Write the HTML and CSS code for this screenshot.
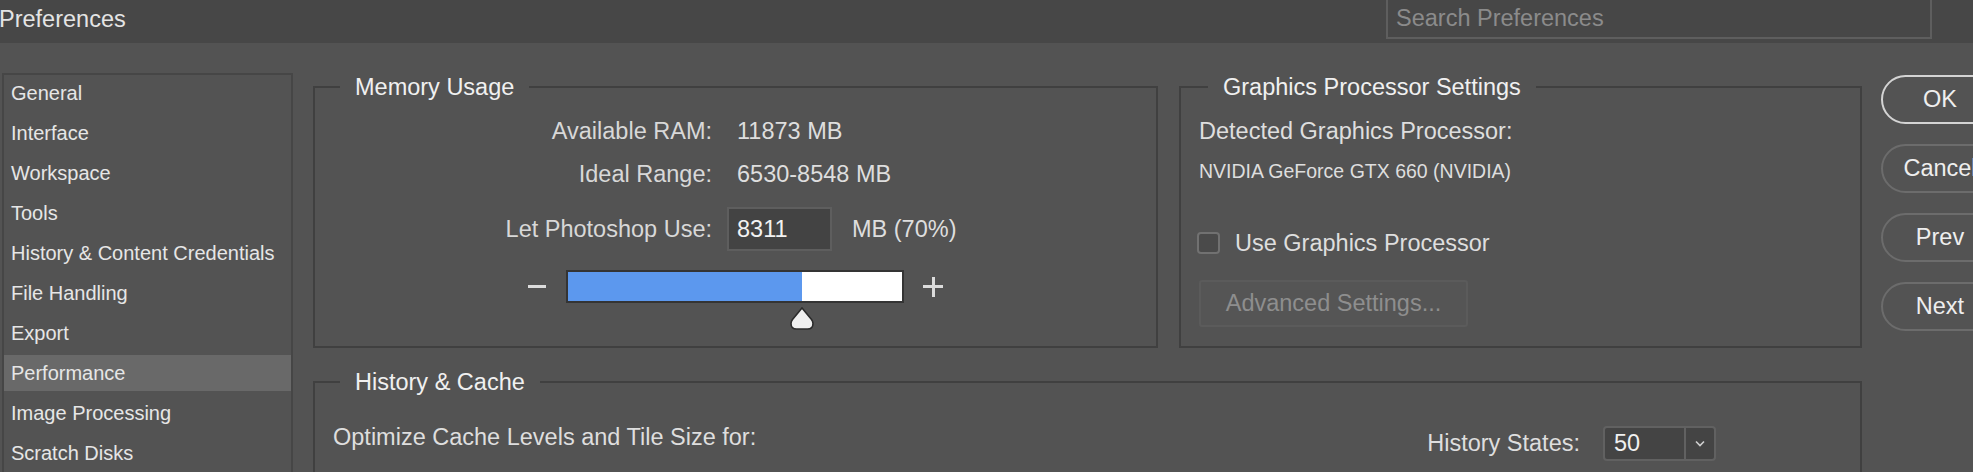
FILE: index.html
```html
<!DOCTYPE html>
<html>
<head>
<meta charset="utf-8">
<title>Preferences</title>
<link rel="stylesheet" href="styles.css">
</head>
<body>
<div class="titlebar">
  <div class="title">Preferences</div>
  <div class="search">Search Preferences</div>
</div>
<div class="page">
  <div class="sidebar">
    <div class="nav-item">General</div>
    <div class="nav-item">Interface</div>
    <div class="nav-item">Workspace</div>
    <div class="nav-item">Tools</div>
    <div class="nav-item">History &amp; Content Credentials</div>
    <div class="nav-item">File Handling</div>
    <div class="nav-item">Export</div>
    <div class="nav-item active">Performance</div>
    <div class="nav-item">Image Processing</div>
    <div class="nav-item">Scratch Disks</div>
  </div>
  <div class="content">
    <div class="top-row">
      <fieldset class="group mem">
        <legend>Memory Usage</legend>
        <div class="row r1"><span class="label">Available RAM:</span><span class="value">11873 MB</span></div>
        <div class="row r2"><span class="label">Ideal Range:</span><span class="value">6530-8548 MB</span></div>
        <div class="row r3"><span class="label">Let Photoshop Use:</span><span class="input">8311</span><span class="unit">MB (70%)</span></div>
        <div class="slider-row">
          <span class="minus"></span>
          <div class="bar">
            <div class="fill" style="width:70%"></div>
            <svg class="thumb" style="left:70%" width="24" height="23" viewBox="0 0 24 23"><path d="M12 1 L21.5 12.5 Q23 14.5 23 16.5 Q23 22 17.5 22 L6.5 22 Q1 22 1 16.5 Q1 14.5 2.5 12.5 Z" fill="#efefef" stroke="#2b2b2b" stroke-width="1.6"/></svg>
          </div>
          <span class="plus"></span>
        </div>
      </fieldset>
      <fieldset class="group gpu">
        <legend>Graphics Processor Settings</legend>
        <div class="gpu-detected">Detected Graphics Processor:</div>
        <div class="gpu-name">NVIDIA GeForce GTX 660 (NVIDIA)</div>
        <div class="check-row"><span class="checkbox"></span><span>Use Graphics Processor</span></div>
        <div class="adv">Advanced Settings...</div>
      </fieldset>
    </div>
    <fieldset class="group hist">
      <legend>History &amp; Cache</legend>
      <div class="hist-row">
        <div class="opt">Optimize Cache Levels and Tile Size for:</div>
        <div class="hs">
          <span class="hs-label">History States:</span>
          <div class="combo">
            <span class="combo-val">50</span>
            <span class="combo-arrow"><svg width="10" height="7" viewBox="0 0 10 7"><path d="M1 1.5 L5 5.5 L9 1.5" fill="none" stroke="#cfcfcf" stroke-width="1.6"/></svg></span>
          </div>
        </div>
      </div>
      <div class="dropdown"></div>
    </fieldset>
  </div>
  <div class="buttons">
    <div class="btn default">OK</div>
    <div class="btn">Cancel</div>
    <div class="btn">Prev</div>
    <div class="btn">Next</div>
  </div>
</div>
</body>
</html>
```
FILE: styles.css
```css
html, body {
  margin: 0;
  padding: 0;
}
body {
  width: 1973px;
  height: 472px;
  overflow: hidden;
  background: #535353;
  font-family: "Liberation Sans", Arial, sans-serif;
  font-size: 23.5px;
  color: #dedede;
}
.titlebar {
  height: 43px;
  background: #474747;
  display: flex;
  justify-content: space-between;
  align-items: flex-start;
  overflow: hidden;
}
.title {
  line-height: 28px;
  margin-top: 5px;
  margin-left: -1px;
  color: #e4e4e4;
}
.search {
  margin-top: -3px;
  margin-right: 41px;
  width: 546px;
  height: 42px;
  box-sizing: border-box;
  border: 2px solid #5e5e5e;
  padding-left: 8px;
  display: flex;
  align-items: center;
  color: #8b8b8b;
}
.page {
  display: flex;
  height: 429px;
  box-sizing: border-box;
  overflow: hidden;
  padding-top: 30px;
  padding-left: 2px;
}
.sidebar {
  width: 291px;
  height: 420px;
  box-sizing: border-box;
  border: 2px solid #464646;
  margin-right: 20px;
  flex-shrink: 0;
}
.nav-item {
  height: 36px;
  line-height: 36px;
  margin-bottom: 4px;
  padding-left: 7px;
  font-size: 20px;
  color: #e6e6e6;
  white-space: nowrap;
}
.nav-item.active {
  background: #696969;
}
.content {
  width: 1549px;
  flex-shrink: 0;
}
.top-row {
  display: flex;
  gap: 21px;
}
.group {
  margin: 0;
  padding: 0;
  border: 2px solid #404040;
  box-sizing: border-box;
  min-width: 0;
}
.group legend {
  margin-left: 25px;
  padding: 0 15px;
  line-height: 28px;
  color: #f0f0f0;
}
.mem {
  width: 845px;
  height: 275px;
}
.gpu {
  width: 683px;
  height: 275px;
}
.gpu legend {
  margin-left: 27px;
}
.row {
  display: flex;
  align-items: center;
  height: 28px;
}
.r1 { margin-top: 16px; }
.r2 { margin-top: 15px; }
.r3 { margin-top: 19px; height: 44px; }
.label {
  width: 397px;
  text-align: right;
  margin-right: 15px;
  flex-shrink: 0;
  color: #d8d8d8;
}
.value {
  padding-left: 10px;
  color: #dedede;
}
.input {
  width: 105px;
  height: 44px;
  box-sizing: border-box;
  border: 2px solid #5e5e5e;
  background: #434343;
  padding-left: 8px;
  line-height: 40px;
  color: #f2f2f2;
}
.unit {
  margin-left: 20px;
}
.slider-row {
  display: flex;
  align-items: center;
  margin-top: 19px;
  margin-left: 213px;
  height: 33px;
}
.minus {
  width: 18px;
  height: 3px;
  background: #dcdcdc;
  margin-right: 20px;
}
.bar {
  position: relative;
  width: 338px;
  height: 33px;
  box-sizing: border-box;
  border: 2px solid #343434;
  background: #ffffff;
}
.fill {
  height: 100%;
  background: #5c98ee;
}
.thumb {
  position: absolute;
  top: 35px;
  transform: translateX(-50%);
}
.plus {
  position: relative;
  width: 20px;
  height: 20px;
  margin-left: 19px;
}
.plus::before, .plus::after {
  content: "";
  position: absolute;
  background: #dcdcdc;
}
.plus::before {
  left: 0;
  top: 8.5px;
  width: 20px;
  height: 3px;
}
.plus::after {
  left: 8.5px;
  top: 0;
  width: 3px;
  height: 20px;
}
.gpu-detected {
  margin-top: 16px;
  margin-left: 18px;
  line-height: 28px;
}
.gpu-name {
  margin-top: 14px;
  margin-left: 18px;
  font-size: 19.5px;
  line-height: 24px;
}
.check-row {
  display: flex;
  align-items: center;
  margin-top: 46px;
  margin-left: 16px;
  height: 28px;
}
.checkbox {
  width: 23px;
  height: 22px;
  box-sizing: border-box;
  border: 2px solid #717171;
  border-radius: 4px;
  background: #4a4a4a;
  margin-right: 15px;
}
.adv {
  margin-top: 23px;
  margin-left: 18px;
  width: 269px;
  height: 47px;
  box-sizing: border-box;
  border: 2px solid #5b5b5b;
  border-radius: 3px;
  background: #555555;
  display: flex;
  align-items: center;
  justify-content: center;
  color: #8e8e8e;
}
.hist {
  margin-top: 20px;
  width: 1549px;
  height: 200px;
}
.hist-row {
  display: flex;
  align-items: flex-start;
  margin-top: 27px;
  padding-left: 18px;
}
.opt {
  line-height: 28px;
}
.hs {
  margin-left: auto;
  margin-right: 144px;
  margin-top: 3px;
  height: 35px;
  display: flex;
  align-items: center;
}
.hs-label {
  margin-right: 23px;
}
.combo {
  width: 113px;
  height: 35px;
  box-sizing: border-box;
  border: 2px solid #616161;
  border-radius: 4px;
  background: #444444;
  display: flex;
}
.combo-val {
  width: 81px;
  box-sizing: border-box;
  padding-left: 9px;
  line-height: 31px;
  border-right: 2px solid #616161;
  color: #f0f0f0;
}
.combo-arrow {
  flex: 1;
  display: flex;
  align-items: center;
  justify-content: center;
}
.dropdown {
  margin-top: 18px;
  margin-left: 18px;
  width: 440px;
  height: 40px;
  box-sizing: border-box;
  border: 2px solid #5e5e5e;
  border-radius: 4px;
}
.buttons {
  margin-left: 19px;
  margin-top: 2px;
  width: 118px;
  flex-shrink: 0;
}
.btn {
  height: 49px;
  margin-bottom: 20px;
  box-sizing: border-box;
  border: 2px solid #6c6c6c;
  border-radius: 25px;
  display: flex;
  align-items: center;
  justify-content: center;
  color: #eeeeee;
}
.btn.default {
  border-color: #d4d4d4;
}
```
